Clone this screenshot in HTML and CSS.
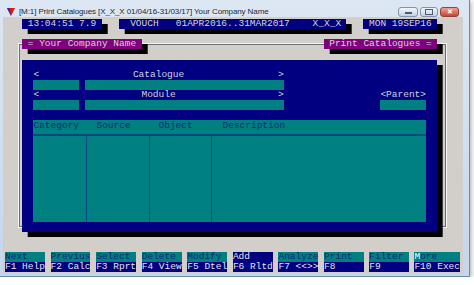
FILE: index.html
```html
<!DOCTYPE html>
<html lang="en">
  <head>
    <meta charset="UTF-8" />
    <title>Print Catalogues</title>
    <link rel="stylesheet" href="styles.css">
  </head>
  <body>
    <div class="window">
      <div class="titlebar">
        <svg class="app-icon" width="8" height="8" viewBox="0 0 8 8">
          <polygon points="0,0 8,0 4,8" fill="#e3141c" />
          <polygon points="0,0 2.5,0 4,8" fill="#1c2fb4" />
        </svg>
        <span class="title">[M:1] Print Catalogues [X_X_X 01/04/16-31/03/17] Your Company Name</span>
        <div class="caption">
          <div class="cap cap-min"><div class="glyph-min"></div></div>
          <div class="cap cap-max"><div class="glyph-max"></div></div>
          <div class="cap cap-close">&#x2715;</div>
        </div>
      </div>

      <div class="client">
        <div class="console">
          <div class="frame"></div>

          <!-- status line -->
          <div class="stat clock"> 13:04:51 7.9</div>
          <div class="stat period">  VOUCH   01APR2016..31MAR2017    X_X_X</div>
          <div class="stat today"> MON 19SEP16</div>

          <div class="tag company"> = Your Company Name</div>
          <div class="tag screen"> Print Catalogues =</div>

          <!-- main panel -->
          <div class="panel">
            <div class="label row-cat"><span>&lt;</span><span>Catalogue</span><span>&gt;</span></div>
            <div class="field code row-catf"></div>
            <div class="field name row-catf"></div>

            <div class="label row-mod"><span>&lt;</span><span>Module</span><span>&gt;</span></div>
            <div class="parent-label">&lt;Parent&gt;</div>
            <div class="field code row-modf"></div>
            <div class="field name row-modf"></div>
            <div class="field parent"></div>

            <div class="table">
              <div class="thead">
                <span>Category</span>
                <span>Source</span>
                <span>Object</span>
                <span>Description</span>
              </div>
              <div class="tbody">
                <span></span><span></span><span></span><span></span>
              </div>
            </div>
          </div>

          <!-- function keys -->
          <div class="fkeys">
            <div class="key"><span class="cmd">Next</span><span class="fn">F1 Help</span></div>
            <div class="key"><span class="cmd">Previus</span><span class="fn">F2 Calc</span></div>
            <div class="key"><span class="cmd">Select</span><span class="fn">F3 Rprt</span></div>
            <div class="key"><span class="cmd">Delete</span><span class="fn">F4 View</span></div>
            <div class="key"><span class="cmd">Modify</span><span class="fn">F5 Dtel</span></div>
            <div class="key active"><span class="cmd">Add</span><span class="fn">F6 Rltd</span></div>
            <div class="key"><span class="cmd">Analyze</span><span class="fn">F7 &lt;&lt;&gt;&gt;</span></div>
            <div class="key"><span class="cmd">Print</span><span class="fn">F8</span></div>
            <div class="key"><span class="cmd">Filter</span><span class="fn">F9</span></div>
            <div class="key wide"><span class="cmd"><b class="cursor">M</b>ore</span><span class="fn">F10 Exec</span></div>
          </div>
        </div>
      </div>
    </div>
  </body>
</html>
```

FILE: styles.css
```css
:root {
  --cw: 5.7px;
  --rh: 10.13px;
  --navy: #000080;
  --teal: #008080;
  --purple: #800080;
  --light: #d4d4d4;
}
body {
  margin: 0;
  background-color: #ffffff;
}
.window {
  width: 469px;
  height: 276px;
  background: linear-gradient(#dde7f3, #c5d6eb);
  border-right: 1px solid #6f89a8;
  border-bottom: 1px solid #6f89a8;
  box-shadow: 1px 1px 5px rgba(0, 0, 0, 0.35);
}
.titlebar {
  height: 17px;
  box-sizing: border-box;
  padding: 6px 0 0 7px;
  display: flex;
  align-items: center;
  font-family: "Liberation Sans", sans-serif;
  font-size: 8px;
  letter-spacing: -0.1px;
  color: #1b2636;
}
.app-icon {
  margin-right: 4px;
  flex: none;
}
.title {
  white-space: pre;
}
.caption {
  flex: none;
  margin-left: auto;
  margin-right: 10px;
  display: flex;
  gap: 2px;
}
.cap {
  height: 10px;
  width: 18px;
  border: 1px solid #8394ac;
  border-radius: 3px;
  background: linear-gradient(#f2f6fb, #c4d1e2);
  display: flex;
  align-items: center;
  justify-content: center;
  box-sizing: border-box;
}
.cap-min {
  width: 20px;
}
.glyph-min {
  width: 7px;
  height: 2px;
  margin-top: 3px;
  background-color: #4c5c74;
}
.glyph-max {
  width: 6px;
  height: 4px;
  border: 1px solid #4c5c74;
}
.cap-close {
  width: 19px;
  border-color: #93443a;
  background: linear-gradient(#eaa494, #c7472f);
  color: #ffffff;
  font-size: 7px;
  font-weight: bold;
}

.client {
  margin-left: 3px;
  width: 460px;
  height: 257px;
  background-color: #d2cfca;
  padding: 2px 0 0 2px;
  box-sizing: border-box;
}
.console {
  display: grid;
  grid-template-columns: repeat(80, var(--cw));
  grid-template-rows: repeat(25, var(--rh));
  font-family: "Liberation Mono", monospace;
  font-size: 9.5px;
  line-height: var(--rh);
  white-space: pre;
  color: var(--light);
}

.frame {
  grid-area: 3 / 3 / 22 / 79;
  margin: calc(var(--rh) / 2) calc(var(--cw) / 2);
  border: 1px solid #6e6e6e;
  outline: 1px solid #f4f4f4;
}

.stat {
  grid-row: 1;
  background-color: var(--navy);
  box-shadow: var(--cw) 5px 0 #000;
}
.clock {
  grid-column: 4 / 18;
}
.period {
  grid-column: 21 / 61;
}
.today {
  grid-column: 64 / 77;
}
.tag {
  grid-row: 3;
  background-color: var(--purple);
  box-shadow: var(--cw) 5px 0 #000;
}
.company {
  grid-column: 4 / 25;
}
.screen {
  grid-column: 57 / 77;
}

.panel {
  grid-area: 5 / 4 / 22 / 77;
  background-color: var(--navy);
  box-shadow: var(--cw) 5px 0 #000;
  display: grid;
  grid-template-columns: repeat(73, var(--cw));
  grid-template-rows: repeat(17, var(--rh));
}
.label {
  grid-column: 3 / 47;
  display: flex;
  justify-content: space-between;
}
.row-cat {
  grid-row: 2;
}
.row-catf {
  grid-row: 3;
}
.row-mod {
  grid-row: 4;
}
.row-modf {
  grid-row: 5;
}
.field {
  background-color: var(--teal);
}
.field.code {
  grid-column: 3 / 11;
}
.field.name {
  grid-column: 12 / 47;
}
.parent-label {
  grid-area: 4 / 64 / 5 / 72;
}
.field.parent {
  grid-area: 5 / 64 / 6 / 72;
}

.table {
  grid-area: 7 / 3 / 17 / 72;
  display: flex;
  flex-direction: column;
  background-color: var(--teal);
  color: #0a2a78;
}
.thead {
  height: 14px;
  display: grid;
  grid-template-columns: 63px 62px 64px 1fr;
  border-bottom: 2px solid #0b4a80;
}
.thead span {
  line-height: 11px;
}
.tbody {
  flex: 1;
  display: grid;
  grid-template-columns: 54px 63px 62px 1fr;
}
.tbody span {
  border-right: 1px solid #0b4a80;
}
.tbody span:last-child {
  border-right: none;
}

.fkeys {
  grid-area: 24 / 1 / 26 / 81;
  display: flex;
  gap: var(--cw);
}
.key {
  width: calc(var(--cw) * 7);
  display: flex;
  flex-direction: column;
}
.key.wide {
  width: calc(var(--cw) * 8);
}
.key span {
  height: var(--rh);
}
.cmd {
  background-color: var(--teal);
  color: #0a2a78;
}
.fn {
  background-color: var(--navy);
  color: #e4e4e4;
}
.key.active .cmd {
  background-color: var(--navy);
  color: #e4e4e4;
}
.cursor {
  font-weight: normal;
  color: #ffffff;
}
```
